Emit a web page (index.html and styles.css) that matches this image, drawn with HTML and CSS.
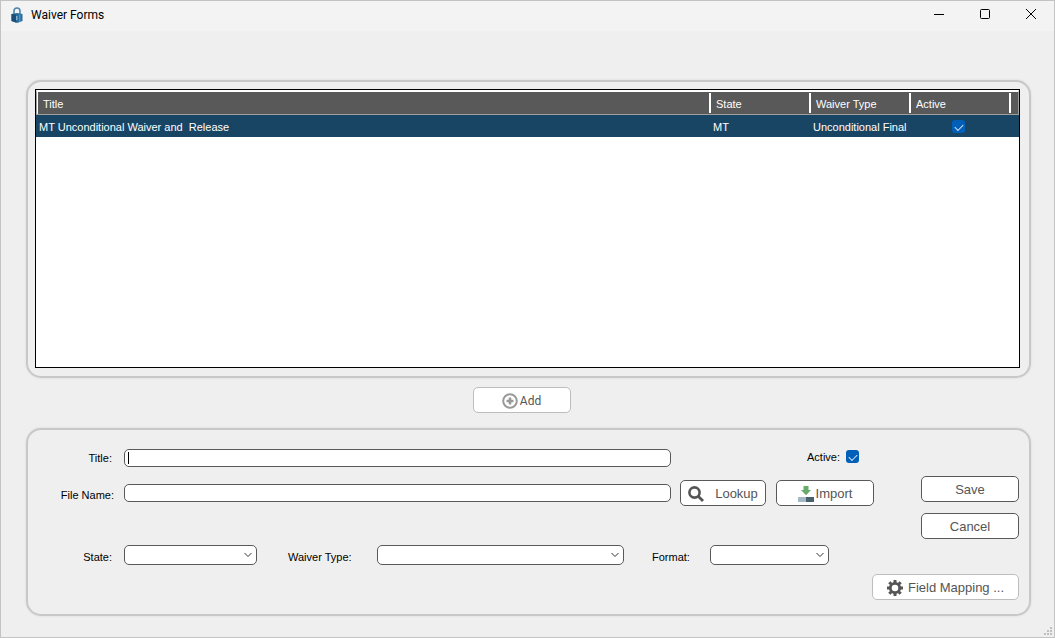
FILE: index.html
```html
<!DOCTYPE html>
<html lang="en">
<head>
<meta charset="utf-8">
<title>Waiver Forms</title>
<link rel="stylesheet" href="styles.css">
</head>
<body>
<div class="window">
  <header class="titlebar">
    <svg class="app-icon" width="12" height="16" viewBox="0 0 12 16" aria-hidden="true">
      <path d="M3 8V4a3 3 0 0 1 6 0v4" fill="none" stroke="#4b86ae" stroke-width="1.600"/>
      <path d="M.5 7L6 6l5.500 1v7L6 16 .5 14z" fill="#2a6c9c"/>
      <path d="M.5 7L5 7.600V15.600L.5 14z" fill="#1a4d7a"/>
      <path d="M8 7.500l1.500-.3v7.500L8 15.300z" fill="#4a90be"/>
      <path d="M5 9h1.500v4H5z" fill="#7fb2d2"/>
    </svg>
    <h1 class="caption">Waiver Forms</h1>
    <div class="window-controls">
      <button class="window-button" aria-label="Minimize"><svg width="12" height="12" viewBox="0 0 12 12"><path d="M1 5.500h10" /></svg></button>
      <button class="window-button" aria-label="Maximize"><svg width="12" height="12" viewBox="0 0 12 12"><rect x="1.500" y=".5" width="9" height="9" rx="1"/></svg></button>
      <button class="window-button" aria-label="Close"><svg width="12" height="12" viewBox="0 0 12 12"><path d="M1 0l10 10M11 0L1 10"/></svg></button>
    </div>
  </header>

  <main class="content">
    <section class="panel list-panel">
      <div class="grid-frame">
        <table class="forms-table">
          <colgroup><col><col class="col-data"><col class="col-data"><col class="col-data"><col class="col-end"></colgroup>
          <thead>
            <tr><th>Title</th><th>State</th><th>Waiver Type</th><th>Active</th><th></th></tr>
          </thead>
          <tbody>
            <tr>
              <td>MT Unconditional Waiver and&nbsp; Release</td>
              <td>MT</td>
              <td>Unconditional Final</td>
              <td class="cell-check"><input class="check" type="checkbox" checked aria-label="Active"></td>
              <td></td>
            </tr>
          </tbody>
        </table>
      </div>
    </section>

    <div class="add-bar">
      <button class="button button-light button-add">
        <svg width="16" height="16" viewBox="0 0 16 16" aria-hidden="true"><circle cx="8" cy="8" r="6.800" fill="none" stroke="#999" stroke-width="2"/><path d="M8 4.500v7M4.500 8h7" stroke="#999" stroke-width="2.600"/></svg>
        Add
      </button>
    </div>

    <section class="panel edit-panel">
      <div class="fields">
        <div class="row row-title">
          <label class="label label-lead" for="title">Title:</label>
          <span class="text-wrap"><input class="text" id="title" type="text"><span class="caret"></span></span>
          <div class="side active-field">
            <label class="label" for="active">Active:</label>
            <input class="check" id="active" type="checkbox" checked>
          </div>
        </div>
        <div class="row row-file">
          <label class="label label-lead" for="file">File Name:</label>
          <input class="text" id="file" type="text">
          <div class="side">
            <button class="button button-lookup">
              <svg width="16" height="16" viewBox="0 0 16 16" aria-hidden="true"><circle cx="6.500" cy="6.500" r="5.100" fill="none" stroke="#555" stroke-width="2.600"/><path d="M10.200 10.200l4.800 4.800" stroke="#555" stroke-width="2.800"/></svg>
              Lookup
            </button>
            <button class="button button-import">
              <svg width="16" height="16" viewBox="0 0 16 16" aria-hidden="true"><path d="M5.500 0h5v4H13L8 9.200 3 4h2.500z" fill="#67aa6b"/><path d="M0 11h8v5H0z" fill="#a3b8c4"/><path d="M8 11h8v5H8z" fill="#49616d"/></svg>
              Import
            </button>
          </div>
        </div>
        <div class="row row-combos">
          <label class="label label-lead" for="state">State:</label>
          <span class="combo combo-state"><select id="state"><option></option></select><svg width="8" height="6" viewBox="0 0 8 6" aria-hidden="true"><path d="M.5 1L4 4.500 7.500 1"/></svg></span>
          <label class="label label-type" for="type">Waiver Type:</label>
          <span class="combo combo-type"><select id="type"><option></option></select><svg width="8" height="6" viewBox="0 0 8 6" aria-hidden="true"><path d="M.5 1L4 4.500 7.500 1"/></svg></span>
          <label class="label label-format" for="format">Format:</label>
          <span class="combo combo-format"><select id="format"><option></option></select><svg width="8" height="6" viewBox="0 0 8 6" aria-hidden="true"><path d="M.5 1L4 4.500 7.500 1"/></svg></span>
        </div>
      </div>
      <div class="actions">
        <button class="button">Save</button>
        <button class="button">Cancel</button>
        <button class="button button-light button-mapping">
          <svg width="16" height="16" viewBox="0 0 16 16" aria-hidden="true"><circle cx="8" cy="8" r="4.700" fill="none" stroke="#555" stroke-width="2.800"/><path d="M8 0v3M8 13v3M0 8h3M13 8h3M2.300 2.300l2 2M11.700 11.700l2 2M2.300 13.700l2-2M11.700 4.300l2-2" stroke="#555" stroke-width="3"/></svg>
          Field Mapping ...
        </button>
      </div>
    </section>
  </main>
  <svg class="grip" width="8" height="8" viewBox="0 0 8 8" aria-hidden="true"><path d="M6 0h2v2H6zM3 3h2v2H3zM6 3h2v2H6zM0 6h2v2H0zM3 6h2v2H3zM6 6h2v2H6z" fill="#bfbfbf"/></svg>
</div>
</body>
</html>
```
FILE: styles.css
```css
* { box-sizing: border-box; }

body {
  margin: 0;
  background: #efefef;
  color: #000;
  font: 11px/14px "Liberation Sans", Arial, sans-serif;
}

button, input, select { font: inherit; color: inherit; margin: 0; }

.window {
  position: relative;
  display: flex;
  flex-direction: column;
  min-height: 100vh;
  border: 1px solid #c3c3c3;
  background: #efefef;
}

.titlebar {
  display: flex;
  align-items: center;
  height: 30px;
  padding: 0 0 2px 10px;
  background: #f3f3f3;
}

.caption {
  flex: 1;
  margin: 0 0 0 8px;
  font: 12px/16px Roboto, "Noto Sans", sans-serif;
}

.window-controls { display: flex; }

.window-button {
  display: flex;
  align-items: center;
  justify-content: center;
  width: 46px;
  height: 28px;
  padding: 0;
  border: 0;
  background: none;
}

.window-button svg { fill: none; stroke: #000; }

.content {
  flex: 1;
  display: flex;
  flex-direction: column;
  padding: 49px 23px 21px 25px;
}

.panel {
  border: 2px solid #c8c8c8;
  border-radius: 15px;
  box-shadow: 0 0 2px #d0d0d0;
}

.list-panel {
  flex: 1;
  display: flex;
  padding: 7px 9px 8px 7px;
}

.grid-frame {
  flex: 1;
  border: 1px solid #000;
  background: #fff;
}

.forms-table {
  width: 100%;
  table-layout: fixed;
  border-collapse: separate;
  border-spacing: 0;
}

.col-data { width: 100px; }
.col-end { width: 10px; }

.forms-table th {
  height: 25px;
  padding: 1px 0 0 7px;
  border-top: 2px solid #fff;
  border-bottom: 1px solid #a0a0a0;
  background: #595959 linear-gradient(#fff, #fff) 0 1px / 2px 20px no-repeat;
  color: #fff;
  font-weight: normal;
  text-align: left;
}

.forms-table th:first-child {
  border-left: 1px solid #a0a0a0;
  background-position: 0 0;
  background-size: 1px 100%;
  padding-left: 6px;
}

.forms-table th:last-child { border-right: 1px solid #a0a0a0; }

.forms-table td {
  height: 22px;
  padding: 1px 0 0 3px;
  background: #194564;
  color: #fff;
  white-space: nowrap;
}

.forms-table td + td { padding-left: 4px; }

.forms-table .cell-check { padding: 0 2px 0 0; }
.forms-table .check { margin: 0 auto; }

.check {
  appearance: none;
  display: grid;
  width: 13px;
  height: 13px;
  border-radius: 3px;
  background: #005fb8;
}

.check:checked::after {
  content: "";
  display: block;
  width: 7px;
  height: 4px;
  margin: 4px 0 0 3px;
  border: solid #d5e5f4;
  border-width: 0 0 1px 1px;
  transform: rotate(-45deg);
}

.add-bar {
  display: flex;
  justify-content: center;
  padding: 9px 14px 15px 0;
}

.button {
  display: flex;
  align-items: center;
  justify-content: center;
  gap: 2px;
  width: 98px;
  height: 26px;
  padding: 1px 0 0;
  border: 1px solid #595959;
  border-radius: 5px;
  background: #fff;
  color: #555;
  font-size: 13px;
  line-height: 16px;
  white-space: nowrap;
}

.button-light { border-color: #bdbdbd; }
.button-add { font: 12px/16px Roboto, "Noto Sans", sans-serif; }

.edit-panel {
  display: flex;
  gap: 47px;
  height: 188px;
  padding: 18px 10px 14px 0;
}

.fields { flex: 1; display: flex; flex-direction: column; }

.row { display: flex; align-items: center; }
.row-title { height: 20px; }
.row-file { height: 26px; margin-top: 12px; }
.row-combos { height: 22px; margin-top: 38px; }

.label { white-space: nowrap; }
.label-lead { width: 96px; padding-right: 12px; text-align: right; }

.text-wrap { position: relative; flex: 1; display: flex; }

.text {
  flex: 1;
  min-width: 0;
  height: 18px;
  padding: 0 4px;
  border: 1px solid #595959;
  border-radius: 5px;
  background: #fff;
}

.caret {
  position: absolute;
  left: 4px;
  top: 3px;
  width: 1px;
  height: 12px;
  background: #000;
}

.side {
  display: flex;
  align-items: center;
  gap: 10px;
  width: 203px;
  padding-left: 9px;
}

.active-field { justify-content: flex-end; gap: 6px; padding: 0 15px 3px 0; }

.button-lookup { width: 86px; gap: 11px; }

.combo { position: relative; display: flex; height: 20px; }
.combo-state { width: 133px; }
.combo-type { flex: 1; }
.combo-format { width: 119px; margin-right: 45px; }

.combo select {
  appearance: none;
  width: 100%;
  padding: 0 16px 0 4px;
  border: 1px solid #595959;
  border-radius: 5px;
  background: #fff;
}

.combo svg {
  position: absolute;
  right: 5px;
  top: 7px;
  fill: none;
  stroke: #333;
  pointer-events: none;
}

.label-type { width: 120px; padding-left: 31px; }
.label-format { width: 86px; padding-left: 28px; }

.row-file .label,
.row-combos .label { padding-top: 4px; }
.row-file .label-lead { padding-right: 10px; }

.actions {
  display: flex;
  flex-direction: column;
  align-items: flex-end;
  gap: 11px;
  width: 98px;
  padding-top: 28px;
}

.button-mapping { flex: none; width: 147px; margin-top: auto; gap: 5px; }

.grip { position: absolute; right: 2px; bottom: 2px; }
```
